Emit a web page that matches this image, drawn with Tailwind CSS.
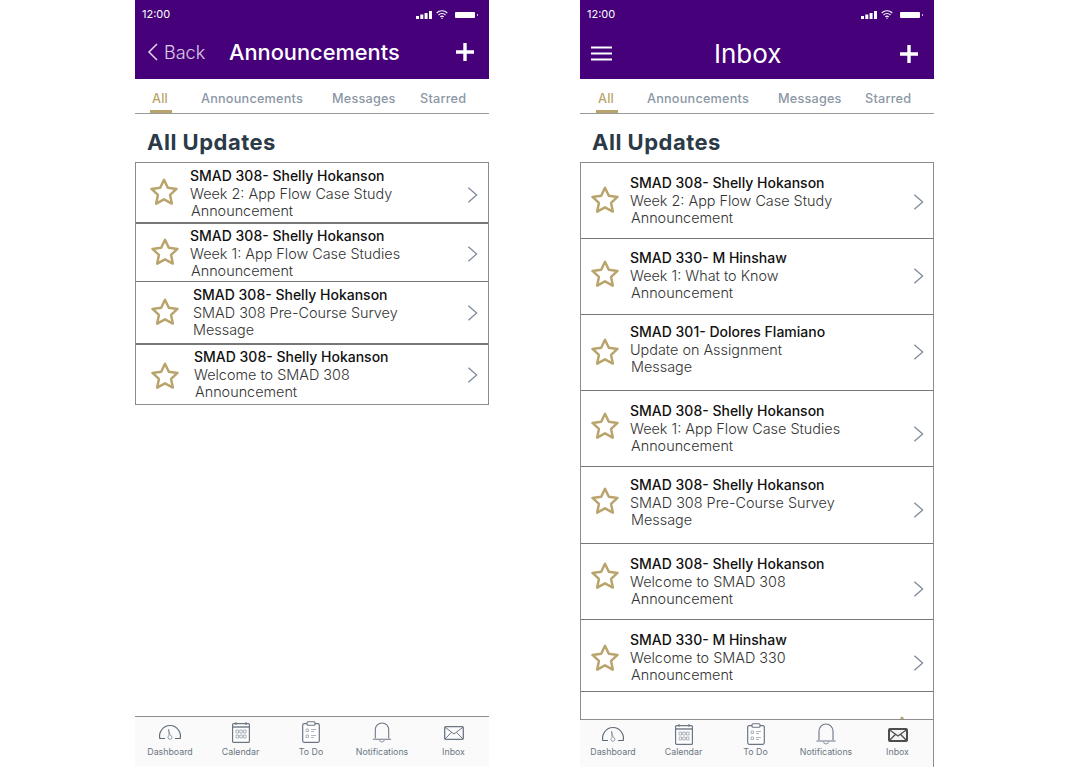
<!DOCTYPE html>
<html lang="en">
<head>
  <meta charset="UTF-8" />
  <title>Announcements and Inbox</title>
  <script src="https://cdn.jsdelivr.net/npm/@tailwindcss/browser@4"></script>
</head>
<body class="bg-white font-['Inter','Liberation_Sans',sans-serif] overflow-hidden">

  <!-- shared icons -->
  <svg class="hidden">
    <symbol id="star" viewBox="0 0 28 28"><path d="M14 1.800l3.800 8 8.700 1.100-6.400 6 1.700 8.700-7.800-4.300-7.800 4.300 1.700-8.700-6.400-6 8.700-1.100z" fill="none" stroke="#b8a46c" stroke-width="2.500" stroke-linejoin="round"/></symbol>
    <symbol id="chev" viewBox="0 0 12 18"><path d="M1.500 1l9 8-9 8" fill="none" stroke="#7d8a9c" stroke-width="1.400"/></symbol>
    <symbol id="plus" viewBox="0 0 18 18"><path d="M9 0v18M0 9h18" stroke="#fff" stroke-width="3.400"/></symbol>
    <symbol id="signal" viewBox="0 0 16 8"><path d="M0 5h3v3H0zM4.300 3.500h3V8h-3zM8.600 2h3v6h-3zM13 0h3v8h-3z" fill="#fff"/></symbol>
    <symbol id="wifi" viewBox="0 0 12 9"><path d="M.7 3A7.500 7.500 0 0 1 11.300 3M2.500 5A5 5 0 0 1 9.500 5M4.300 6.900a2.500 2.500 0 0 1 3.400 0" fill="none" stroke="#fff" stroke-width="1.100"/><circle cx="6" cy="8.300" r=".7" fill="#fff"/></symbol>
    <symbol id="batt" viewBox="0 0 24 8"><rect width="20" height="6" y="1" rx="1" fill="#fff"/><rect x="22" y="3" width="1" height="2" fill="#cbb8dd"/></symbol>
    <symbol id="dash" viewBox="0 0 24 16"><path d="M7 14.500H1.800C.4 8.500 5 1.500 12 1.500s11.600 7 10.200 13H17" fill="none" stroke="#5f6b78" stroke-width="1.200"/><path d="M10.500 5l.6 6.500a2 2 0 1 0 2.800 1.500 2 2 0 0 0 -1.800-1.800z" fill="none" stroke="#8b95a0" stroke-width=".9"/></symbol>
    <symbol id="cal" viewBox="0 0 18 22"><rect x=".6" y="2.600" width="16.800" height="18.800" rx="1" fill="#fff" stroke="#6b7683" stroke-width="1.200"/><path d="M.6 6h16.800" stroke="#6b7683" stroke-width="1.400"/><path d="M4 1v3M14 1v3" stroke="#6b7683"/><path d="M4 9h2.500v3H4zM7.800 9h2.500v3H7.800zM11.600 9h2.500v3h-2.500zM4 14h2.500v3H4zM7.800 14h2.500v3H7.800zM11.600 14h2.500v3h-2.500z" fill="none" stroke="#8b95a0" stroke-width=".7"/></symbol>
    <symbol id="todo" viewBox="0 0 18 22"><rect x=".7" y="2.700" width="16.600" height="18.600" rx="1.500" fill="#fff" stroke="#6b7683" stroke-width="1.200"/><rect x="5" y=".7" width="8" height="3.500" rx="1" fill="#fff" stroke="#6b7683" stroke-width="1.100"/><path d="M4 8h2.500v2.500H4zM4 14h2.500v2.500H4z" fill="none" stroke="#8b95a0" stroke-width=".7"/><path d="M9 8.500h5M9 10.500h3M9 14.500h5M9 16.500h3" stroke="#8b95a0" stroke-width=".7"/></symbol>
    <symbol id="bell" viewBox="0 0 20 23"><path d="M3 18V9a7 7 0 0 1 14 0v9M.5 19h19" fill="none" stroke="#6b7683" stroke-width="1.100"/><path d="M7.500 19.500a2.500 2.500 0 0 0 5 0" fill="none" stroke="#8b95a0"/></symbol>
    <symbol id="mail" viewBox="0 0 20 14"><rect x=".7" y=".7" width="18.600" height="12.600" rx="1" fill="none" stroke="#6b7683" stroke-width="1.300"/><path d="M1 1.200l9 6.800 9-6.800M1 13l6.500-6.700M19 13l-6.500-6.700" fill="none" stroke="#6b7683"/></symbol>
    <symbol id="mail-on" viewBox="0 0 20 14"><rect x="1" y="1" width="18" height="12" rx="1" fill="#f4f4f4" stroke="#4d4d4d" stroke-width="2"/><path d="M1 1.500l9 6.500 9-6.500M1 13l6.500-6.700M19 13l-6.500-6.700" fill="none" stroke="#4d4d4d" stroke-width="1.300"/></symbol>
  </svg>

  <div class="flex items-start pl-[135px] gap-[91px] h-[768px]">

    <!-- Announcements phone -->
    <section class="w-[354px] h-[768px] flex flex-col">
      <header class="h-[79px] bg-[#45007a] text-white relative">
        <div class="flex justify-between items-center h-[29px] pl-[7px] pr-[10px]">
          <span class="text-[11px]">12:00</span>
          <div class="flex items-center gap-[4px]">
            <svg class="w-[16px] h-[8px]"><use href="#signal"/></svg>
            <svg class="w-[12px] h-[9px]"><use href="#wifi"/></svg>
            <svg class="w-[24px] h-[8px] ml-[3px]"><use href="#batt"/></svg>
          </div>
        </div>
        <div class="flex items-center h-[46px] pl-[12px] pr-[15px]">
          <svg class="w-[11px] h-[18px]" viewBox="0 0 11 18"><path d="M10 1L2 9l8 8" fill="none" stroke="#fff" stroke-opacity=".85" stroke-width="1.500"/></svg>
          <span class="ml-[6px] w-[65px] text-[18px] font-light text-white/80">Back</span>
          <span class="text-[21.800px] font-medium">Announcements</span>
          <svg class="w-[18px] h-[18px] ml-auto"><use href="#plus"/></svg>
        </div>
      </header>

      <nav class="h-[35px] border-b border-[#9a9a9a] flex text-[12.700px] font-medium text-[#8b97a5] tracking-[.2px]">
        <span class="ml-[17px] w-[49px] pt-[10px] text-[#b8a46c] relative">All<i class="absolute left-[-2px] top-[31px] w-[22px] h-[3px] bg-[#b8a46c]"></i></span>
        <span class="pt-[10px] w-[131px]">Announcements</span>
        <span class="pt-[10px] w-[88px]">Messages</span>
        <span class="pt-[10px]">Starred</span>
      </nav>

      <h1 class="h-[48px] pl-[12px] pt-[13px] text-[22px] leading-[30px] tracking-[.5px] font-bold text-[#2b3a47]">All Updates</h1>

      <div class="border border-[#8c8c8c] text-[14.400px] leading-[17.500px] text-[#333] font-light">
        <a class="flex items-start h-[61px] border-b-2 border-[#777]">
          <svg class="w-[28px] h-[28px] ml-[14px] mt-[15px] shrink-0"><use href="#star"/></svg>
          <div class="ml-[12px] mt-[4px] whitespace-nowrap"><div class="text-[14px] font-medium text-[#111]">SMAD 308- Shelly Hokanson</div><div>Week 2: App Flow Case Study</div><div class="ml-px">Announcement</div></div>
          <svg class="w-[11px] h-[18px] ml-auto mr-[10px] mt-[23px]"><use href="#chev"/></svg>
        </a>
        <a class="flex items-start h-[58px] border-b border-[#777]">
          <svg class="w-[28px] h-[28px] ml-[15px] mt-[14px] shrink-0"><use href="#star"/></svg>
          <div class="ml-[11px] mt-[3px] whitespace-nowrap"><div class="text-[14px] font-medium text-[#111]">SMAD 308- Shelly Hokanson</div><div>Week 1: App Flow Case Studies</div><div class="ml-px">Announcement</div></div>
          <svg class="w-[11px] h-[18px] ml-auto mr-[10px] mt-[21px]"><use href="#chev"/></svg>
        </a>
        <a class="flex items-start h-[63px] border-b-2 border-[#777]">
          <svg class="w-[28px] h-[28px] ml-[15px] mt-[16px] shrink-0"><use href="#star"/></svg>
          <div class="ml-[14px] mt-[4px] whitespace-nowrap"><div class="text-[14px] font-medium text-[#111]">SMAD 308- Shelly Hokanson</div><div>SMAD 308 Pre-Course Survey</div><div>Message</div></div>
          <svg class="w-[11px] h-[18px] ml-auto mr-[10px] mt-[22px]"><use href="#chev"/></svg>
        </a>
        <a class="flex items-start h-[59px]">
          <svg class="w-[28px] h-[28px] ml-[15px] mt-[17px] shrink-0"><use href="#star"/></svg>
          <div class="ml-[15px] mt-[3px] whitespace-nowrap"><div class="text-[14px] font-medium text-[#111]">SMAD 308- Shelly Hokanson</div><div>Welcome to SMAD 308</div><div class="ml-px">Announcement</div></div>
          <svg class="w-[11px] h-[18px] ml-auto mr-[10px] mt-[21px]"><use href="#chev"/></svg>
        </a>
      </div>

      <footer class="mt-[311px] h-[50px] border-t border-[#8f8f8f] bg-[#fafafa] grid grid-cols-[70px_71px_70px_72px_71px] pt-[4px] text-[8.800px] leading-[10px] text-[#6b7683] text-center">
        <div class="flex flex-col items-center justify-end h-[36px]"><svg class="w-[24px] h-[16px] mb-[7px]"><use href="#dash"/></svg>Dashboard</div>
        <div class="flex flex-col items-center justify-end h-[36px]"><svg class="w-[18px] h-[22px] mb-[4px]"><use href="#cal"/></svg>Calendar</div>
        <div class="flex flex-col items-center justify-end h-[36px]"><svg class="w-[18px] h-[22px] mb-[4px]"><use href="#todo"/></svg>To Do</div>
        <div class="flex flex-col items-center justify-end h-[36px]"><svg class="w-[20px] h-[23px] mb-[4px]"><use href="#bell"/></svg>Notifications</div>
        <div class="flex flex-col items-center justify-end h-[36px]"><svg class="w-[20px] h-[14px] mb-[7px]"><use href="#mail"/></svg>Inbox</div>
      </footer>
    </section>

    <!-- Inbox phone -->
    <section class="w-[354px] h-[768px] flex flex-col">
      <header class="h-[79px] bg-[#45007a] text-white">
        <div class="flex justify-between items-center h-[29px] pl-[7px] pr-[10px]">
          <span class="text-[11px]">12:00</span>
          <div class="flex items-center gap-[4px]">
            <svg class="w-[16px] h-[8px]"><use href="#signal"/></svg>
            <svg class="w-[12px] h-[9px]"><use href="#wifi"/></svg>
            <svg class="w-[24px] h-[8px] ml-[3px]"><use href="#batt"/></svg>
          </div>
        </div>
        <div class="flex items-center h-[49px] pl-[11px] pr-[16px]">
          <svg class="w-[21px] h-[15px]" viewBox="0 0 21 15"><path d="M0 1.500h21M0 7.500h21M0 13.500h21" stroke="#fff" stroke-width="1.800"/></svg>
          <span class="ml-[102px] text-[26px] font-normal">Inbox</span>
          <svg class="w-[18px] h-[18px] ml-auto"><use href="#plus"/></svg>
        </div>
      </header>

      <nav class="h-[35px] border-b border-[#9a9a9a] flex text-[12.700px] font-medium text-[#8b97a5] tracking-[.2px]">
        <span class="ml-[18px] w-[49px] pt-[10px] text-[#b8a46c] relative">All<i class="absolute left-[-2px] top-[31px] w-[22px] h-[3px] bg-[#b8a46c]"></i></span>
        <span class="pt-[10px] w-[131px]">Announcements</span>
        <span class="pt-[10px] w-[87px]">Messages</span>
        <span class="pt-[10px]">Starred</span>
      </nav>

      <h1 class="h-[48px] pl-[12px] pt-[13px] text-[22px] leading-[30px] tracking-[.5px] font-bold text-[#2b3a47]">All Updates</h1>

      <div class="h-[557px] border-t border-x border-[#8c8c8c] text-[14.400px] leading-[17.500px] text-[#333] font-light overflow-hidden relative">
        <a class="flex items-start h-[76px] border-b border-[#777]">
          <svg class="w-[28px] h-[28px] ml-[10px] mt-[23px] shrink-0"><use href="#star"/></svg>
          <div class="ml-[11px] mt-[11px] whitespace-nowrap"><div class="text-[14px] font-medium text-[#111]">SMAD 308- Shelly Hokanson</div><div>Week 2: App Flow Case Study</div><div class="ml-px">Announcement</div></div>
          <svg class="w-[11px] h-[18px] ml-auto mr-[9px] mt-[30px]"><use href="#chev"/></svg>
        </a>
        <a class="flex items-start h-[76px] border-b border-[#777]">
          <svg class="w-[28px] h-[28px] ml-[10px] mt-[21px] shrink-0"><use href="#star"/></svg>
          <div class="ml-[11px] mt-[10px] whitespace-nowrap"><div class="text-[14px] font-medium text-[#111]">SMAD 330- M Hinshaw</div><div>Week 1: What to Know</div><div class="ml-px">Announcement</div></div>
          <svg class="w-[11px] h-[18px] ml-auto mr-[9px] mt-[28px]"><use href="#chev"/></svg>
        </a>
        <a class="flex items-start h-[76px] border-b border-[#777]">
          <svg class="w-[28px] h-[28px] ml-[10px] mt-[23px] shrink-0"><use href="#star"/></svg>
          <div class="ml-[11px] mt-[8px] whitespace-nowrap"><div class="text-[14px] font-medium text-[#111]">SMAD 301- Dolores Flamiano</div><div>Update on Assignment</div><div class="ml-px">Message</div></div>
          <svg class="w-[11px] h-[18px] ml-auto mr-[9px] mt-[28px]"><use href="#chev"/></svg>
        </a>
        <a class="flex items-start h-[76px] border-b border-[#777]">
          <svg class="w-[28px] h-[28px] ml-[10px] mt-[21px] shrink-0"><use href="#star"/></svg>
          <div class="ml-[11px] mt-[11px] whitespace-nowrap"><div class="text-[14px] font-medium text-[#111]">SMAD 308- Shelly Hokanson</div><div>Week 1: App Flow Case Studies</div><div class="ml-px">Announcement</div></div>
          <svg class="w-[11px] h-[18px] ml-auto mr-[9px] mt-[34px]"><use href="#chev"/></svg>
        </a>
        <a class="flex items-start h-[77px] border-b border-[#777]">
          <svg class="w-[28px] h-[28px] ml-[10px] mt-[20px] shrink-0"><use href="#star"/></svg>
          <div class="ml-[11px] mt-[9px] whitespace-nowrap"><div class="text-[14px] font-medium text-[#111]">SMAD 308- Shelly Hokanson</div><div>SMAD 308 Pre-Course Survey</div><div class="ml-px">Message</div></div>
          <svg class="w-[11px] h-[18px] ml-auto mr-[9px] mt-[34px]"><use href="#chev"/></svg>
        </a>
        <a class="flex items-start h-[76px] border-b border-[#777]">
          <svg class="w-[28px] h-[28px] ml-[10px] mt-[18px] shrink-0"><use href="#star"/></svg>
          <div class="ml-[11px] mt-[11px] whitespace-nowrap"><div class="text-[14px] font-medium text-[#111]">SMAD 308- Shelly Hokanson</div><div>Welcome to SMAD 308</div><div class="ml-px">Announcement</div></div>
          <svg class="w-[11px] h-[18px] ml-auto mr-[9px] mt-[36px]"><use href="#chev"/></svg>
        </a>
        <a class="flex items-start h-[72px] border-b border-[#777]">
          <svg class="w-[28px] h-[28px] ml-[10px] mt-[24px] shrink-0"><use href="#star"/></svg>
          <div class="ml-[11px] mt-[11px] whitespace-nowrap"><div class="text-[14px] font-medium text-[#111]">SMAD 330- M Hinshaw</div><div>Welcome to SMAD 330</div><div class="ml-px">Announcement</div></div>
          <svg class="w-[11px] h-[18px] ml-auto mr-[9px] mt-[34px]"><use href="#chev"/></svg>
        </a>
        <!-- next row's star tip peeks out above the tab bar -->
        <svg class="w-[28px] h-[28px] absolute left-[307px] top-[553px]"><use href="#star"/></svg>
      </div>

      <footer class="h-[48px] border-t border-r border-[#8f8f8f] bg-[#fafafa] grid grid-cols-[66px_75px_69px_72px_71px] pt-[1px] text-[8.800px] leading-[10px] text-[#6b7683] text-center">
        <div class="flex flex-col items-center justify-end h-[36px]"><svg class="w-[24px] h-[16px] mb-[5px]"><use href="#dash"/></svg>Dashboard</div>
        <div class="flex flex-col items-center justify-end h-[36px]"><svg class="w-[18px] h-[22px] mb-[2px]"><use href="#cal"/></svg>Calendar</div>
        <div class="flex flex-col items-center justify-end h-[36px]"><svg class="w-[18px] h-[22px] mb-[2px]"><use href="#todo"/></svg>To Do</div>
        <div class="flex flex-col items-center justify-end h-[36px]"><svg class="w-[20px] h-[23px] mb-[2px]"><use href="#bell"/></svg>Notifications</div>
        <div class="flex flex-col items-center justify-end h-[36px]"><svg class="w-[20px] h-[14px] mb-[5px]"><use href="#mail-on"/></svg>Inbox</div>
      </footer>
    </section>
  </div>
</body>
</html>
